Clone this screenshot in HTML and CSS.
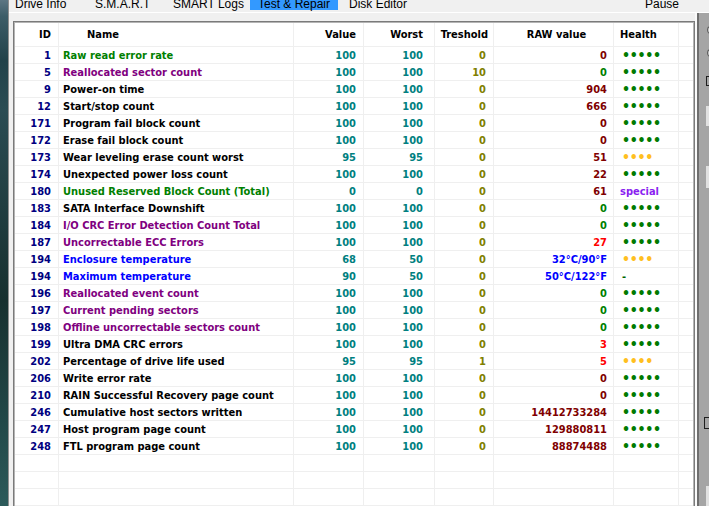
FILE: index.html
```html
<!DOCTYPE html>
<html lang="en">
<head>
	<meta charset="UTF-8">
	<title>Test &amp; Repair</title>
	<link rel="stylesheet" href="styles.css">
</head>
<body>
	<div class="desk"></div>
	<div class="window">
		<div class="tabs">
			<div class="tab t-info">Drive Info</div>
			<div class="tab t-smart">S.M.A.R.T</div>
			<div class="tab t-logs">SMART Logs</div>
			<div class="tab t-test active">Test &amp; Repair</div>
			<div class="tab t-disk">Disk Editor</div>
			<div class="tab t-pause">Pause</div>
		</div>
		<div class="content">
			<div class="box">
				<div class="box-in">
					<table class="smart">
						<colgroup>
							<col class="c-id">
							<col class="c-name">
							<col class="c-val">
							<col class="c-worst">
							<col class="c-thr">
							<col class="c-raw">
							<col class="c-health">
							<col class="c-end">
						</colgroup>
						<thead>
							<tr>
								<th class="id">ID</th>
								<th class="name">Name</th>
								<th class="val">Value</th>
								<th class="worst">Worst</th>
								<th class="thr">Treshold</th>
								<th class="raw">RAW value</th>
								<th class="health">Health</th>
								<th></th>
							</tr>
						</thead>
						<tbody>
							<tr><td class="id">1</td><td class="name g">Raw read error rate</td><td class="val">100</td><td class="worst">100</td><td class="thr">0</td><td class="raw">0</td><td class="health"><span class="dots">•••••</span></td><td></td></tr>
							<tr><td class="id">5</td><td class="name p">Reallocated sector count</td><td class="val">100</td><td class="worst">100</td><td class="thr">10</td><td class="raw g">0</td><td class="health"><span class="dots">•••••</span></td><td></td></tr>
							<tr><td class="id">9</td><td class="name">Power-on time</td><td class="val">100</td><td class="worst">100</td><td class="thr">0</td><td class="raw">904</td><td class="health"><span class="dots">•••••</span></td><td></td></tr>
							<tr><td class="id">12</td><td class="name">Start/stop count</td><td class="val">100</td><td class="worst">100</td><td class="thr">0</td><td class="raw">666</td><td class="health"><span class="dots">•••••</span></td><td></td></tr>
							<tr><td class="id">171</td><td class="name">Program fail block count</td><td class="val">100</td><td class="worst">100</td><td class="thr">0</td><td class="raw">0</td><td class="health"><span class="dots">•••••</span></td><td></td></tr>
							<tr><td class="id">172</td><td class="name">Erase fail block count</td><td class="val">100</td><td class="worst">100</td><td class="thr">0</td><td class="raw">0</td><td class="health"><span class="dots">•••••</span></td><td></td></tr>
							<tr><td class="id">173</td><td class="name">Wear leveling erase count worst</td><td class="val">95</td><td class="worst">95</td><td class="thr">0</td><td class="raw">51</td><td class="health"><span class="dots warn">••••</span></td><td></td></tr>
							<tr><td class="id">174</td><td class="name">Unexpected power loss count</td><td class="val">100</td><td class="worst">100</td><td class="thr">0</td><td class="raw">22</td><td class="health"><span class="dots">•••••</span></td><td></td></tr>
							<tr><td class="id">180</td><td class="name g">Unused Reserved Block Count (Total)</td><td class="val">0</td><td class="worst">0</td><td class="thr">0</td><td class="raw">61</td><td class="health special">special</td><td></td></tr>
							<tr><td class="id">183</td><td class="name">SATA Interface Downshift</td><td class="val">100</td><td class="worst">100</td><td class="thr">0</td><td class="raw g">0</td><td class="health"><span class="dots">•••••</span></td><td></td></tr>
							<tr><td class="id">184</td><td class="name p">I/O CRC Error Detection Count Total</td><td class="val">100</td><td class="worst">100</td><td class="thr">0</td><td class="raw g">0</td><td class="health"><span class="dots">•••••</span></td><td></td></tr>
							<tr><td class="id">187</td><td class="name p">Uncorrectable ECC Errors</td><td class="val">100</td><td class="worst">100</td><td class="thr">0</td><td class="raw r">27</td><td class="health"><span class="dots">•••••</span></td><td></td></tr>
							<tr><td class="id">194</td><td class="name b">Enclosure temperature</td><td class="val">68</td><td class="worst">50</td><td class="thr">0</td><td class="raw b">32°C/90°F</td><td class="health"><span class="dots warn">••••</span></td><td></td></tr>
							<tr><td class="id">194</td><td class="name b">Maximum temperature</td><td class="val">90</td><td class="worst">50</td><td class="thr">0</td><td class="raw b">50°C/122°F</td><td class="health"><span class="dash">-</span></td><td></td></tr>
							<tr><td class="id">196</td><td class="name p">Reallocated event count</td><td class="val">100</td><td class="worst">100</td><td class="thr">0</td><td class="raw g">0</td><td class="health"><span class="dots">•••••</span></td><td></td></tr>
							<tr><td class="id">197</td><td class="name p">Current pending sectors</td><td class="val">100</td><td class="worst">100</td><td class="thr">0</td><td class="raw g">0</td><td class="health"><span class="dots">•••••</span></td><td></td></tr>
							<tr><td class="id">198</td><td class="name p">Offline uncorrectable sectors count</td><td class="val">100</td><td class="worst">100</td><td class="thr">0</td><td class="raw g">0</td><td class="health"><span class="dots">•••••</span></td><td></td></tr>
							<tr><td class="id">199</td><td class="name">Ultra DMA CRC errors</td><td class="val">100</td><td class="worst">100</td><td class="thr">0</td><td class="raw r">3</td><td class="health"><span class="dots">•••••</span></td><td></td></tr>
							<tr><td class="id">202</td><td class="name">Percentage of drive life used</td><td class="val">95</td><td class="worst">95</td><td class="thr">1</td><td class="raw r">5</td><td class="health"><span class="dots warn">••••</span></td><td></td></tr>
							<tr><td class="id">206</td><td class="name">Write error rate</td><td class="val">100</td><td class="worst">100</td><td class="thr">0</td><td class="raw">0</td><td class="health"><span class="dots">•••••</span></td><td></td></tr>
							<tr><td class="id">210</td><td class="name">RAIN Successful Recovery page count</td><td class="val">100</td><td class="worst">100</td><td class="thr">0</td><td class="raw">0</td><td class="health"><span class="dots">•••••</span></td><td></td></tr>
							<tr><td class="id">246</td><td class="name">Cumulative host sectors written</td><td class="val">100</td><td class="worst">100</td><td class="thr">0</td><td class="raw">14412733284</td><td class="health"><span class="dots">•••••</span></td><td></td></tr>
							<tr><td class="id">247</td><td class="name">Host program page count</td><td class="val">100</td><td class="worst">100</td><td class="thr">0</td><td class="raw">129880811</td><td class="health"><span class="dots">•••••</span></td><td></td></tr>
							<tr><td class="id">248</td><td class="name">FTL program page count</td><td class="val">100</td><td class="worst">100</td><td class="thr">0</td><td class="raw">88874488</td><td class="health"><span class="dots">•••••</span></td><td></td></tr>
							<tr><td>&nbsp;</td><td></td><td></td><td></td><td></td><td></td><td></td><td></td></tr>
							<tr><td>&nbsp;</td><td></td><td></td><td></td><td></td><td></td><td></td><td></td></tr>
							<tr><td>&nbsp;</td><td></td><td></td><td></td><td></td><td></td><td></td><td></td></tr>
							<tr><td>&nbsp;</td><td></td><td></td><td></td><td></td><td></td><td></td><td></td></tr>
						</tbody>
					</table>
				</div>
			</div>
			<div class="gap"></div>
			<div class="side">
				<div class="radio r1"></div>
				<div class="radio r2"></div>
				<div class="check c1"></div>
				<div class="btn b1"></div>
				<div class="btn b2"></div>
				<div class="check c2"></div>
				<div class="btn b3"></div>
			</div>
		</div>
	</div>
</body>
</html>
```

FILE: styles.css
```css
/* reset */
* {
	margin: 0;
	padding: 0;
	box-sizing: border-box;
}
html, body {
	width: 709px;
	height: 506px;
	overflow: hidden;
}
body {
	display: flex;
	background: #f0f0f0;
	font-family: "Liberation Sans", Arial, sans-serif;
}

/* desktop behind the window */
.desk {
	width: 8px;
	flex: none;
	background: linear-gradient(#5d7683 0, #3d5d68 16px, #22424a 60px, #2b4c53 110px, #17302f 300px, #224848 420px, #2c5a5a 506px);
}
.window {
	flex: 1;
	min-width: 0;
	display: flex;
	flex-direction: column;
	border-left: 1px solid #8e8e8e;
}

/* tab strip, cut at the top */
.tabs {
	height: 13px;
	flex: none;
	display: flex;
	border-bottom: 1px solid #fff;
	font-size: 12px;
	color: #000;
}
.tab {
	height: 10px;
	line-height: 9px;
	padding-left: 8px;
	white-space: nowrap;
	flex: none;
}
.t-info { width: 78px; padding-left: 6px; }
.t-smart { width: 78px; }
.t-logs { width: 85px; }
.t-test { width: 88px; }
.t-disk { margin-left: 3px; }
.t-pause { margin-left: auto; margin-right: 30px; }
.tab.active {
	background: #3399ff;
}

.content {
	flex: 1;
	min-height: 0;
	display: flex;
	padding-left: 4px;
}
.box {
	width: 682px;
	flex: none;
	margin-top: 8px;
	border: 1px solid #7a7a7a;
	border-bottom: none;
	background: #fff;
	overflow: hidden;
}
.box-in {
	height: 100%;
	border: 1px solid #b4b4b4;
	border-bottom: none;
}
.gap {
	width: 2px;
	flex: none;
	background: #fafafa;
}
.side {
	flex: 1;
	display: flex;
	flex-direction: column;
	align-items: flex-start;
	padding-left: 8px;
	border-left: 2px solid #6e6e6e;
	background: #a5a5a5;
}
.radio {
	width: 8px;
	height: 8px;
	border: 1px solid #5a5a5a;
	border-radius: 50%;
	background: #c8c8c8;
}
.r1 { margin-top: 13px; }
.r2 { margin-top: 15px; }
.check {
	border: 1px solid #1e1e1e;
}
.c1 { width: 10px; height: 10px; margin-top: 19px; margin-left: -1px; }
.c2 { width: 13px; height: 13px; margin-top: 229px; margin-left: -3px; }
.btn {
	width: 10px;
	background: #e1e1e1;
	margin-left: -1px;
}
.b1 { height: 21px; margin-top: 20px; }
.b2 { height: 22px; margin-top: 40px; }
.b3 { height: 20px; margin-top: 57px; margin-left: -1px; }

/* smart table */
.smart {
	width: 678px;
	table-layout: fixed;
	border-collapse: separate;
	border-spacing: 0;
	font-family: "DejaVu Sans Condensed", "DejaVu Sans", sans-serif;
	font-stretch: condensed;
	font-weight: bold;
	font-size: 11px;
}
.c-id { width: 44px; }
.c-name { width: 235px; }
.c-val { width: 70px; }
.c-worst { width: 71px; }
.c-thr { width: 59px; }
.c-raw { width: 120px; }
.c-health { width: 65px; }
.c-end { width: 14px; }
.smart th,
.smart td {
	border-right: 1px solid #efefef;
	border-bottom: 1px solid #efefef;
	white-space: nowrap;
	overflow: hidden;
	font-weight: bold;
}
.smart th:last-child,
.smart td:last-child {
	border-right: none;
}
.smart th {
	line-height: 23px;
	color: #000;
}
.smart td {
	height: 17px;
	line-height: 15px;
	padding-top: 1px;
}
.id { text-align: right; padding-right: 7px; color: #000080; }
.name { text-align: left; padding-left: 4px; color: #000; }
th.name { padding-left: 28px; }
.val { text-align: right; padding-right: 7px; color: #008080; }
.worst { text-align: right; padding-right: 11px; color: #008080; }
.thr { text-align: right; padding-right: 7px; color: #808000; }
th.thr { padding-right: 5px; }
.raw { text-align: right; padding-right: 6px; color: #800000; }
th.raw { text-align: center; padding: 0 0 0 6px; }
.health { text-align: left; padding-left: 6px; }
th.id, th.val, th.worst { color: #000; }

.smart .g { color: #008000; }
.smart .p { color: #800080; }
.smart .b { color: #0000ff; }
.smart .r { color: #ff0000; }

.dots {
	display: inline-block;
	height: 15px;
	line-height: 14px;
	vertical-align: top;
	padding-left: 2px;
	font-size: 14px;
	letter-spacing: -0.3px;
	color: #007a00;
}
.dots.warn {
	color: #ffbf1f;
}
.dash {
	padding-left: 2px;
	color: #006400;
}
.special {
	color: #8a1ff0;
}
```
